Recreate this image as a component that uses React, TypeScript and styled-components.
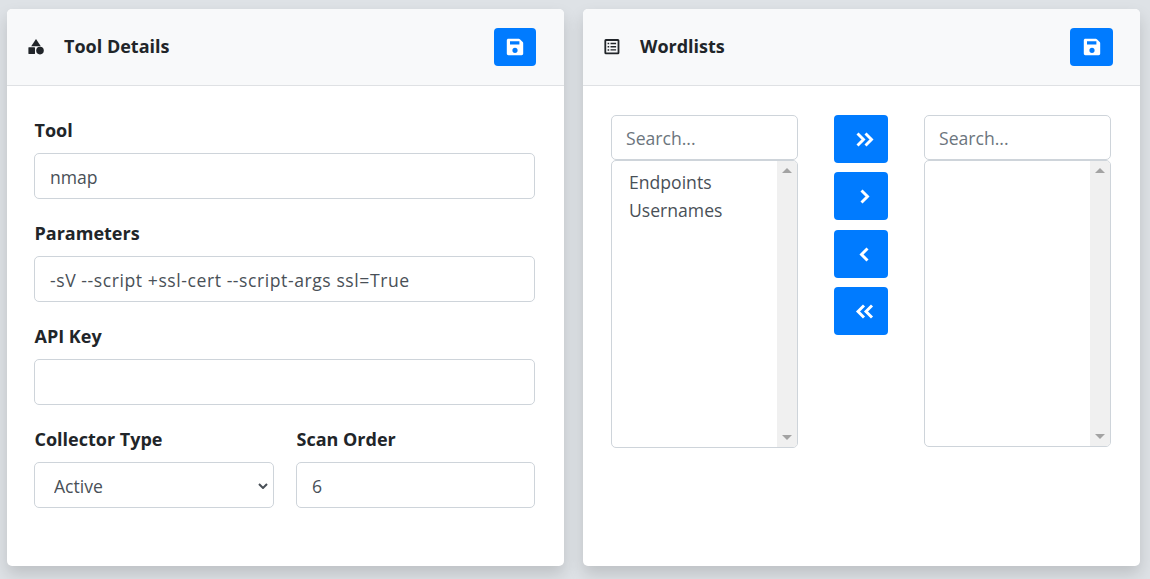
import React from "react";
import styled, { createGlobalStyle } from "styled-components";

const Global = createGlobalStyle`
  html, body { margin: 0; padding: 0; height: 100%; overflow: hidden; background: #dee2e6; }
  * { box-sizing: border-box; }
  body { font-family: "Open Sans", "Noto Sans", sans-serif; font-size: 17.6px; color: #212529; }
`;

const Page = styled.div`
  display: flex;
  gap: 19px;
  padding: 9px 10px 13px 7px;
  height: 579px;
`;
const Card = styled.section`
  flex: 0 0 557px;
  height: 557px;
  background: #fff;
  border-radius: 5px;
  box-shadow: 0 8px 16px rgba(0, 0, 0, 0.15);
  display: flex;
  flex-direction: column;
`;
const Header = styled.header`
  height: 77px;
  flex: none;
  display: flex;
  align-items: center;
  background: #f8f9fa;
  border-bottom: 1px solid #dfe1e4;
  border-radius: 5px 5px 0 0;
  padding: 0 28px 1px 21px;
`;
const HeaderIcon = styled.span`
  width: 36px;
  flex: none;
  display: flex;
  color: #212529;
`;
const Title = styled.h2`
  flex: 1;
  margin: 0;
  padding-bottom: 2px;
  font-size: 18px;
  font-weight: 700;
  line-height: 26px;
`;
const SaveButton = styled.button<{ $wide?: boolean }>`
  width: ${(p) => (p.$wide ? 43 : 42)}px;
  margin-right: ${(p) => (p.$wide ? -1 : 0)}px;
  height: 38px;
  padding: 0;
  border: 0;
  border-radius: 4px;
  background: #007bff;
  color: #fff;
  display: flex;
  align-items: center;
  justify-content: center;
`;
const Form = styled.form`
  padding: 32px 29px 0 27px;
  display: grid;
  grid-template-columns: 240px 239px;
  column-gap: 22px;
  row-gap: 22px;
`;
const Field = styled.div<{ $wide?: boolean }>`
  grid-column: ${(p) => (p.$wide ? "1 / -1" : "auto")};
  display: flex;
  flex-direction: column;
  gap: 8px;
`;
const Label = styled.label`
  font-weight: 700;
  font-size: 18px;
  line-height: 25px;
  padding: 0 0 2px 0.5px;
`;
const Input = styled.input<{ $tracking?: number }>`
  width: 100%;
  height: 46px;
  border: 1px solid #ced4da;
  border-radius: 5px;
  padding: 2px 15px 0;
  font: inherit;
  font-size: 17.6px;
  letter-spacing: ${(p) => p.$tracking ?? 0}px;
  color: #495057;
  background: #fff;
  outline: none;
  &::placeholder { color: #6c757d; opacity: 1; }
`;
const SelectWrap = styled.div`
  position: relative;
`;
const Select = styled.select`
  width: 100%;
  height: 46px;
  border: 1px solid #ced4da;
  border-radius: 5px;
  padding: 2px 15px 0 19px;
  font: inherit;
  font-size: 17.6px;
  color: #495057;
  background: #fff;
  appearance: none;
  outline: none;
`;
const Caret = styled.svg`
  position: absolute;
  right: 6px;
  top: 21px;
  width: 10px;
  height: 6px;
  pointer-events: none;
`;
const DualList = styled.div`
  padding: 29px 29px 0 28px;
  display: grid;
  grid-template-columns: 187px 54px 187px;
  column-gap: 36px;
  align-items: start;
`;
const Column = styled.div`
  display: flex;
  flex-direction: column;
`;
const SearchInput = styled(Input)`
  height: 45px;
  padding: 0 14px;
`;
const ListBox = styled.div<{ $h: number }>`
  height: ${(p) => p.$h}px;
  border: 1px solid #ced4da;
  border-radius: 5px;
  display: flex;
  overflow: hidden;
`;
const Items = styled.ul`
  flex: 1;
  list-style: none;
  margin: 0;
  padding: 7px 0 0 17px;
`;
const Item = styled.li`
  font-size: 17.6px;
  line-height: 28px;
  color: #495057;
`;
const Scrollbar = styled.div`
  width: 20px;
  flex: none;
  background: #f0f0f0;
  display: flex;
  flex-direction: column;
  justify-content: space-between;
  align-items: center;
  padding: 7px 0;
`;
const Arrow = styled.span<{ $down?: boolean }>`
  width: 0;
  height: 0;
  border-left: 5px solid transparent;
  border-right: 5px solid transparent;
  ${(p) => (p.$down ? "border-top: 5px solid #a3a3a3;" : "border-bottom: 5px solid #a3a3a3;")}
`;
const MoveButtons = styled.div`
  display: flex;
  flex-direction: column;
  gap: 9.33px;
`;
const MoveButton = styled.button`
  width: 54px;
  height: 48px;
  padding: 0 0 0 7px;
  border: 0;
  border-radius: 4px;
  background: #007bff;
  color: #fff;
  display: flex;
  align-items: center;
  justify-content: center;
`;

const ShapesIcon = () => (
  <svg width="17" height="16" viewBox="0 0 17 16" fill="currentColor">
    <path d="M8 0l4.8 7.2H3.2z" />
    <rect x="0.4" y="8.3" width="6.6" height="6.6" rx="0.4" />
    <circle cx="12" cy="11.6" r="3.8" />
  </svg>
);
const ListIcon = () => (
  <svg width="16" height="16" viewBox="0 0 16 16" fill="none" stroke="currentColor">
    <rect x="1.3" y="1" width="13.2" height="13.4" rx="0.6" strokeWidth="1.8" />
    <path d="M6.5 4.5h5.6M6.5 7.7h5.6M6.5 10.9h5.6" strokeWidth="1.4" />
    <path d="M3.6 4.5h1.6M3.6 7.7h1.6M3.6 10.9h1.6" strokeWidth="1.5" />
  </svg>
);
const SaveIcon = () => (
  <svg width="18" height="18" viewBox="0 0 18 18">
    <path
      fill="#fff"
      fillRule="evenodd"
      d="M2.4.8h10.4c.4 0 .8.2 1.1.5l2.8 2.8c.3.3.5.7.5 1.1v10.4c0 .9-.7 1.6-1.6 1.6H2.4c-.9 0-1.6-.7-1.6-1.6V2.4C.8 1.5 1.5.8 2.4.8zM4 3.2v3.2h9.4V3.2zM9 9.7a2.6 2.6 0 1 0 0 5.2 2.6 2.6 0 0 0 0-5.2z"
    />
  </svg>
);
const Chevrons = ({ d }: { d: string }) => (
  <svg width="20" height="20" viewBox="0 0 20 20" fill="none" stroke="#fff" strokeWidth="2.9" strokeLinecap="butt" strokeLinejoin="miter">
    <path d={d} />
  </svg>
);

function Box({ items, h }: { items: string[]; h: number }) {
  return (
    <Column>
      <SearchInput placeholder="Search..." />
      <ListBox $h={h}>
        <Items>{items.map((i) => <Item key={i}>{i}</Item>)}</Items>
        <Scrollbar><Arrow /><Arrow $down /></Scrollbar>
      </ListBox>
    </Column>
  );
}

export default function App() {
  return (
    <Page>
      <Global />
      <Card>
        <Header>
          <HeaderIcon><ShapesIcon /></HeaderIcon>
          <Title>Tool Details</Title>
          <SaveButton><SaveIcon /></SaveButton>
        </Header>
        <Form>
          <Field $wide><Label>Tool</Label><Input defaultValue="nmap" /></Field>
          <Field $wide><Label>Parameters</Label><Input $tracking={0.56} defaultValue="-sV --script +ssl-cert --script-args ssl=True" /></Field>
          <Field $wide><Label>API Key</Label><Input /></Field>
          <Field>
            <Label>Collector Type</Label>
            <SelectWrap>
              <Select defaultValue="Active"><option>Active</option><option>Passive</option></Select>
              <Caret viewBox="0 0 10 6" fill="none" stroke="#495057" strokeWidth="2"><path d="M1 1l4 4 4-4" /></Caret>
            </SelectWrap>
          </Field>
          <Field><Label>Scan Order</Label><Input defaultValue="6" /></Field>
        </Form>
      </Card>
      <Card>
        <Header>
          <HeaderIcon><ListIcon /></HeaderIcon>
          <Title>Wordlists</Title>
          <SaveButton $wide><SaveIcon /></SaveButton>
        </Header>
        <DualList>
          <Box items={["Endpoints", "Usernames"]} h={288} />
          <MoveButtons>
            <MoveButton><Chevrons d="M2.5 4.5l6 6-6 6M10.5 4.5l6 6-6 6" /></MoveButton>
            <MoveButton><Chevrons d="M6.5 4.5l6 6-6 6" /></MoveButton>
            <MoveButton><Chevrons d="M12.5 4.5l-6 6 6 6" /></MoveButton>
            <MoveButton><Chevrons d="M9 4.5l-6 6 6 6M17 4.5l-6 6 6 6" /></MoveButton>
          </MoveButtons>
          <Box items={[]} h={287} />
        </DualList>
      </Card>
    </Page>
  );
}
